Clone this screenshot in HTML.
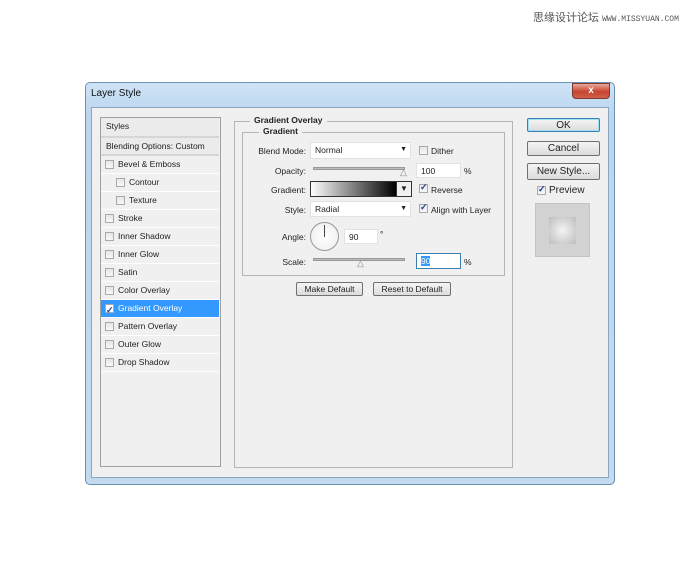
<!DOCTYPE html><html><head><style>
*{margin:0;padding:0;box-sizing:border-box}
body{width:700px;height:567px;background:#fff;position:relative;font-family:"Liberation Sans",Tahoma,sans-serif;font-size:8.5px;color:#222;overflow:hidden}
.a{position:absolute}
.cb{position:absolute;width:9px;height:9px;border:1px solid #a9a9a9;background:linear-gradient(#e6e6e6,#f8f8f8)}
.cb.on::after{content:"✓";position:absolute;left:0;top:-3px;font-size:9px;color:#1a3fa0;font-weight:bold}
.row{position:absolute;left:101px;width:118px;height:18px;border-bottom:1px solid #fff;line-height:17px}
.btn{position:absolute;border:1px solid #707070;border-radius:2px;background:linear-gradient(#f4f4f4,#dcdcdc);text-align:center;color:#222}
.inp{position:absolute;background:#fff;border:1px solid #e2e2e2;padding-left:4px;line-height:14px}
.lbl{position:absolute;text-align:right;width:70px}
</style></head><body>
<div class="a" style="left:533px;top:9px;font-size:11px;color:#555;font-family:'Liberation Sans','Noto Sans CJK SC',sans-serif">思缘设计论坛 <span style="font-size:8px;font-family:'Liberation Mono',monospace">WWW.MISSYUAN.COM</span></div>
<div class="a" style="left:85px;top:82px;width:530px;height:403px;border:1px solid #6d8fb0;border-radius:5px;background:linear-gradient(#cfe3f6,#bcd6ef 30px,#c4daef);"></div>
<div class="a" style="left:91px;top:88px;font-size:10px;color:#111">Layer Style</div>
<div class="a" style="left:572px;top:83px;width:38px;height:16px;border:1px solid #7a3a30;border-radius:0 0 4px 4px;background:linear-gradient(#e9a89a,#c8452f 55%,#d0604a);color:#fff;text-align:center;font-size:10px;font-weight:bold;line-height:14px">x</div>
<div class="a" style="left:91px;top:107px;width:518px;height:371px;background:#f0f0f0;border:1px solid #8aa6c2"></div>
<div class="a" style="left:100px;top:117px;width:121px;height:350px;border:1px solid #a0a0a0;background:#f0f0f0"></div>
<div class="row" style="top:118px;height:20px;border-bottom:2px solid #d6d6d6;padding-left:5px;background:#ebebeb">Styles</div>
<div class="row" style="top:138px;height:18px;border-bottom:2px solid #d6d6d6;padding-left:5px;background:#ebebeb">Blending Options: Custom</div>
<div class="row" style="top:156px"><span class="cb" style="left:4px;top:4px"></span><span class="a" style="left:17px">Bevel &amp; Emboss</span></div>
<div class="row" style="top:174px"><span class="cb" style="left:15px;top:4px"></span><span class="a" style="left:28px">Contour</span></div>
<div class="row" style="top:192px"><span class="cb" style="left:15px;top:4px"></span><span class="a" style="left:28px">Texture</span></div>
<div class="row" style="top:210px"><span class="cb" style="left:4px;top:4px"></span><span class="a" style="left:17px">Stroke</span></div>
<div class="row" style="top:228px"><span class="cb" style="left:4px;top:4px"></span><span class="a" style="left:17px">Inner Shadow</span></div>
<div class="row" style="top:246px"><span class="cb" style="left:4px;top:4px"></span><span class="a" style="left:17px">Inner Glow</span></div>
<div class="row" style="top:264px"><span class="cb" style="left:4px;top:4px"></span><span class="a" style="left:17px">Satin</span></div>
<div class="row" style="top:282px"><span class="cb" style="left:4px;top:4px"></span><span class="a" style="left:17px">Color Overlay</span></div>
<div class="row" style="top:300px;background:#3399ff;color:#fff"><span class="cb on" style="left:4px;top:4px;background:#fff"></span><span class="a" style="left:17px">Gradient Overlay</span></div>
<div class="row" style="top:318px"><span class="cb" style="left:4px;top:4px"></span><span class="a" style="left:17px">Pattern Overlay</span></div>
<div class="row" style="top:336px"><span class="cb" style="left:4px;top:4px"></span><span class="a" style="left:17px">Outer Glow</span></div>
<div class="row" style="top:354px"><span class="cb" style="left:4px;top:4px"></span><span class="a" style="left:17px">Drop Shadow</span></div>
<div class="a" style="left:234px;top:121px;width:279px;height:347px;border:1px solid #b5b5b5"></div>
<div class="a" style="left:250px;top:115px;padding:0 4px;background:#f0f0f0;font-weight:bold">Gradient Overlay</div>
<div class="a" style="left:242px;top:132px;width:263px;height:144px;border:1px solid #b5b5b5"></div>
<div class="a" style="left:259px;top:126px;padding:0 4px;background:#f0f0f0;font-weight:bold">Gradient</div>
<div class="lbl" style="left:236px;top:146px">Blend Mode:</div>
<div class="inp" style="left:310px;top:142px;width:101px;height:17px">Normal<span class="a" style="right:3px;top:0;font-size:7px">▼</span></div>
<span class="cb" style="left:419px;top:146px"></span><div class="a" style="left:431px;top:146px">Dither</div>
<div class="lbl" style="left:236px;top:166px">Opacity:</div>
<div class="a" style="left:313px;top:167px;width:92px;height:3px;background:#bbb;border:1px solid #999"></div>
<div class="a" style="left:400px;top:167px;font-size:9px;color:#888">△</div>
<div class="inp" style="left:416px;top:163px;width:45px;height:15px">100</div><div class="a" style="left:464px;top:166px">%</div>
<div class="lbl" style="left:236px;top:185px">Gradient:</div>
<div class="a" style="left:310px;top:181px;width:102px;height:16px;border:1px solid #333;background:linear-gradient(90deg,#fff,#000 85%)"></div>
<div class="a" style="left:396px;top:181px;width:16px;height:16px;border:1px solid #333;background:#f0f0f0;font-size:8px;text-align:center;line-height:14px">▼</div>
<span class="cb on" style="left:419px;top:184px"></span><div class="a" style="left:431px;top:185px">Reverse</div>
<div class="lbl" style="left:236px;top:205px">Style:</div>
<div class="inp" style="left:310px;top:201px;width:101px;height:16px">Radial<span class="a" style="right:3px;top:0;font-size:7px">▼</span></div>
<span class="cb on" style="left:419px;top:204px"></span><div class="a" style="left:431px;top:205px">Align with Layer</div>
<div class="lbl" style="left:236px;top:232px">Angle:</div>
<div class="a" style="left:310px;top:222px;width:29px;height:29px;border-radius:50%;border:1px solid #999;background:radial-gradient(#fff,#ececec)"></div>
<div class="a" style="left:324px;top:225px;width:1px;height:12px;background:#444"></div>
<div class="inp" style="left:344px;top:229px;width:34px;height:15px">90</div><div class="a" style="left:380px;top:229px">°</div>
<div class="lbl" style="left:236px;top:257px">Scale:</div>
<div class="a" style="left:313px;top:258px;width:92px;height:3px;background:#bbb;border:1px solid #999"></div>
<div class="a" style="left:357px;top:258px;font-size:9px;color:#888">△</div>
<div class="inp" style="left:416px;top:253px;width:45px;height:16px;border-color:#3c7fb1"><span style="background:#3399ff;color:#fff">90</span></div><div class="a" style="left:464px;top:257px">%</div>
<div class="btn" style="left:296px;top:282px;width:67px;height:14px;line-height:12px">Make Default</div>
<div class="btn" style="left:373px;top:282px;width:78px;height:14px;line-height:12px">Reset to Default</div>
<div class="btn" style="left:527px;top:118px;width:73px;height:14px;line-height:14px;font-size:10px;border-color:#3c7fb1;box-shadow:inset 0 0 0 1px #9fe0f5">OK</div>
<div class="btn" style="left:527px;top:141px;width:73px;height:15px;line-height:13px;font-size:10px">Cancel</div>
<div class="btn" style="left:527px;top:163px;width:73px;height:17px;line-height:15px;font-size:10px">New Style...</div>
<span class="cb on" style="left:537px;top:186px"></span><div class="a" style="left:549px;top:185px;font-size:10px">Preview</div>
<div class="a" style="left:535px;top:203px;width:55px;height:54px;background:#d2d2d2;border:1px solid #c4c4c4"></div>
<div class="a" style="left:549px;top:217px;width:27px;height:27px;background:radial-gradient(#f4f4f4,#bdbdbd)"></div>
</body></html>
